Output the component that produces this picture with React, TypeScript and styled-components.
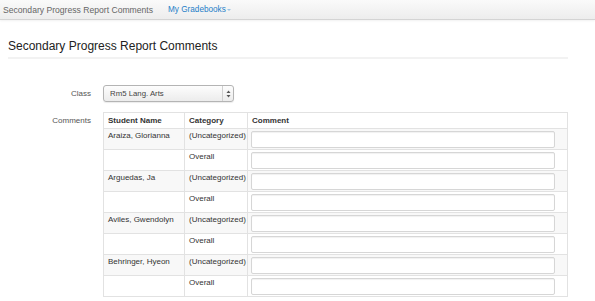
import styled, { createGlobalStyle } from 'styled-components';

const GlobalStyle = createGlobalStyle`
    html, body {
        margin:0;
        height:301px;
        overflow:hidden;
        background:#fff;
    }
    body{
        font-family:"Liberation Sans", Arial, sans-serif;
        font-size:8px;
        color:#333;
    }
`

const rows = [
    { name: 'Araiza, Glorianna' },
    { name: 'Arguedas, Ja' },
    { name: 'Aviles, Gwendolyn' },
    { name: 'Behringer, Hyeon' },
]

const App = () => {
    return (
        <>
            <GlobalStyle />
            <Navbar>
                <Brand>Secondary Progress Report Comments</Brand>
                <NavLink>My Gradebooks<Caret /></NavLink>
            </Navbar>
            <Page>
                <PageHeader>Secondary Progress Report Comments</PageHeader>
                <Form>
                    <Label>Class</Label>
                    <SelectBox>
                        <SelectValue>Rm5 Lang. Arts</SelectValue>
                        <SelectArrows>
                            <svg width="5" height="8" viewBox="0 0 5 8">
                                <path d="M2.5 0.5 L4.5 3 L0.5 3 Z" fill="#555" />
                                <path d="M2.5 7.5 L4.5 5 L0.5 5 Z" fill="#555" />
                            </svg>
                        </SelectArrows>
                    </SelectBox>
                    <Label>Comments</Label>
                    <Table>
                        <colgroup>
                            <col style={{ width: 81 }} />
                            <col style={{ width: 63 }} />
                            <col />
                        </colgroup>
                        <thead>
                            <tr>
                                <Th>Student Name</Th>
                                <Th>Category</Th>
                                <Th>Comment</Th>
                            </tr>
                        </thead>
                        <tbody>
                            {rows.map((r) => (
                                <>
                                    <Tr key={r.name + '1'} $striped>
                                        <Td>{r.name}</Td>
                                        <Td>(Uncategorized)</Td>
                                        <InputCell><TextInput /></InputCell>
                                    </Tr>
                                    <Tr key={r.name + '2'}>
                                        <Td></Td>
                                        <Td>Overall</Td>
                                        <InputCell><TextInput /></InputCell>
                                    </Tr>
                                </>
                            ))}
                        </tbody>
                    </Table>
                </Form>
            </Page>
        </>
    )
}

const Navbar = styled.div`
    display:flex;
    align-items:center;
    height:19px;
    padding-left:3px;
    background:linear-gradient(#fafafa, #ededed);
    border-bottom:1px solid #d4d4d4;
    box-shadow:0 1px 2px rgba(0,0,0,.06);
`
const Brand = styled.div`
    font-size:8.6px;
    color:#666;
`
const NavLink = styled.div`
    display:flex;
    align-items:center;
    margin-left:15px;
    font-size:8.2px;
    color:#1f80c8;
`
const Caret = styled.span`
    width:0;
    height:0;
    margin-left:1px;
    margin-top:1px;
    border-left:2px solid transparent;
    border-right:2px solid transparent;
    border-top:2px solid #9cc4e4;
`
const Page = styled.div`
    padding:0 27px 0 8px;
`
const PageHeader = styled.h1`
    margin:19px 0 0 0;
    padding-bottom:4px;
    font-size:12px;
    font-weight:normal;
    line-height:14px;
    color:#222;
    border-bottom:2px solid #f2f2f2;
`
const Form = styled.div`
    display:grid;
    grid-template-columns:83px 1fr;
    column-gap:12px;
    row-gap:10px;
    padding-top:26px;
    align-items:start;
`
const Label = styled.div`
    text-align:right;
    color:#555;
    line-height:9px;
    padding-top:4px;
`
const SelectBox = styled.div`
    display:flex;
    width:131px;
    height:17px;
    box-sizing:border-box;
    border:1px solid #b4b4b4;
    border-radius:3px;
    background:linear-gradient(#fdfdfd, #ececec);
    box-shadow:0 1px 1px rgba(0,0,0,.08);
`
const SelectValue = styled.div`
    flex:1;
    padding:0 0 0 6px;
    line-height:15px;
    font-size:7.8px;
    color:#444;
`
const SelectArrows = styled.div`
    width:10px;
    display:flex;
    align-items:center;
    justify-content:center;
    border-left:1px solid #d0d0d0;
`
const Table = styled.table`
    width:465px;
    border-collapse:collapse;
    table-layout:fixed;
    border:1px solid #e2e2e2;
`
const Th = styled.th`
    height:16px;
    padding:0 4px;
    box-sizing:border-box;
    text-align:left;
    font-weight:bold;
    line-height:9px;
    color:#333;
    border-left:1px solid #e2e2e2;
`
const Tr = styled.tr<{ $striped?: boolean }>`
    background:${p => p.$striped ? '#f8f8f8' : '#fff'};
    border-top:1px solid #e2e2e2;
`
const Td = styled.td`
    height:21px;
    padding:2px 4px 0 4px;
    box-sizing:border-box;
    vertical-align:top;
    line-height:10px;
    color:#333;
    border-left:1px solid #e2e2e2;
    white-space:nowrap;
`
const InputCell = styled(Td)`
    padding:2px 12px 0 3px;
`
const TextInput = styled.input`
    display:block;
    width:100%;
    height:17px;
    box-sizing:border-box;
    margin:0;
    border:1px solid #d6d6d6;
    border-radius:2px;
    background:#fff;
    box-shadow:inset 0 1px 1px rgba(0,0,0,.06);
`

export default App
